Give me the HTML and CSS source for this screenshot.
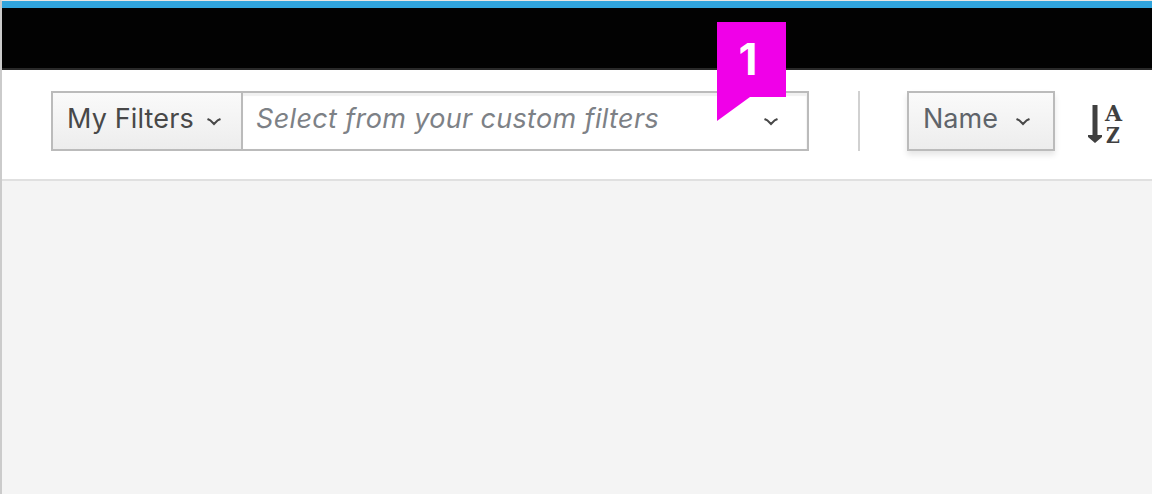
FILE: index.html
```html
<!DOCTYPE html>
<html lang="en">
<head>
<meta charset="utf-8">
<title>Custom filters</title>
<link rel="stylesheet" href="styles.css">
</head>
<body>
<div class="app">
  <header class="masthead"></header>
  <div class="toolbar">
    <div class="filter-group">
      <button class="btn filter-btn"><span class="label filter-label">My Filters</span><svg class="chevron" viewBox="0 0 16 10"><path d="M1.500 2l2.800 1.300L8 7l3.700-3.700L14.500 2"/></svg></button>
      <div class="select"><span class="label placeholder">Select from your custom filters</span><svg class="chevron" viewBox="0 0 16 10"><path d="M1.500 2l2.800 1.300L8 7l3.700-3.700L14.500 2"/></svg></div>
      <div class="callout"><svg class="callout-shape" viewBox="0 0 69 99"><path d="M0 0h69v75H33L0 99z"/></svg><span class="callout-number">1</span></div>
    </div>
    <div class="divider"></div>
    <button class="btn sort-btn"><span class="label sort-label">Name</span><svg class="chevron" viewBox="0 0 16 10"><path d="M1.500 2l2.800 1.300L8 7l3.700-3.700L14.500 2"/></svg></button>
    <div class="sort-order">
      <svg class="arrow" viewBox="0 0 14 38"><path d="M4.500 0h5v30H14v2l-7 6L0 32v-2h4.500z"/></svg>
      <div class="az"><span class="letter">A</span><span class="letter letter-z">Z</span></div>
    </div>
  </div>
  <main class="content"></main>
</div>
</body>
</html>
```

FILE: styles.css
```css
* { box-sizing: border-box; }
body { margin: 0; background: #f4f4f4; font-family: Inter, "Liberation Sans", sans-serif; }
.app {
  height: 494px;
  display: flex;
  flex-direction: column;
  overflow: hidden;
  border-left: 2px solid #cbcbcb;
  border-top: 1px solid #e6e6e6;
}
.masthead { height: 69px; flex: none; background: #020202; border-top: 7px solid #30a4dd; border-bottom: 2px solid #292929; }
.toolbar {
  height: 111px;
  flex: none;
  display: flex;
  align-items: flex-start;
  padding: 21px 0 0 49px;
  background: #fff;
  border-bottom: 2px solid #e0e0e0;
}
.filter-group { position: relative; width: 758px; height: 60px; display: flex; border: 2px solid #bbb; }
.btn {
  display: flex;
  align-items: center;
  margin: 0;
  border: 0;
  background: linear-gradient(#fafafa, #ededed);
  font-family: inherit;
}
.filter-btn { width: 190px; padding: 0 0 0 14px; border-right: 2px solid #bbb; }
.label { font-size: 27px; line-height: 32px; padding-bottom: 4px; white-space: nowrap; text-align: left; }
.filter-label { width: 139px; color: #484848; letter-spacing: 0.15px; }
.select {
  flex: 1;
  display: flex;
  align-items: center;
  background: #fff;
  padding-left: 13px;
  box-shadow: inset 0 3px 1px #f1f1f1, inset -1px 0 1px #f5f5f5;
}
.placeholder { width: 507px; color: #7d8186; font-style: italic; letter-spacing: 0.34px; }
.chevron { width: 16px; height: 10px; flex: none; fill: none; stroke: #484848; stroke-width: 2; margin-top: 2px; }
.callout { position: absolute; left: 664px; top: -71px; width: 69px; height: 99px; }
.callout-shape { display: block; width: 69px; height: 99px; fill: #f000e8; }
.callout-number {
  position: absolute;
  left: 0;
  top: 12px;
  width: 62px;
  text-align: center;
  font-size: 44px;
  line-height: 50px;
  font-weight: 700;
  color: #fff;
}
.divider { width: 2px; height: 60px; margin: 0 47px 0 49px; background: #d1d1d1; }
.sort-btn { width: 148px; height: 60px; padding: 0 0 0 14px; border: 2px solid #bbb; box-shadow: 0 4px 6px rgba(0, 0, 0, 0.1); }
.sort-label { width: 92px; color: #5f646a; }
.sort-order { display: flex; margin: 14px 0 0 33px; }
.arrow { width: 14px; height: 38px; fill: #404040; }
.az {
  display: flex;
  flex-direction: column;
  width: 17px;
  margin-left: 3px;
  align-items: center;
  gap: 6px;
  font-family: "DejaVu Serif", serif;
  font-weight: 700;
  color: #404040;
}
.letter { font-size: 22px; line-height: 16px; }
.letter-z { font-size: 22px; transform: scaleX(0.86); }
.content { flex: 1; background: #f4f4f4; }
```
